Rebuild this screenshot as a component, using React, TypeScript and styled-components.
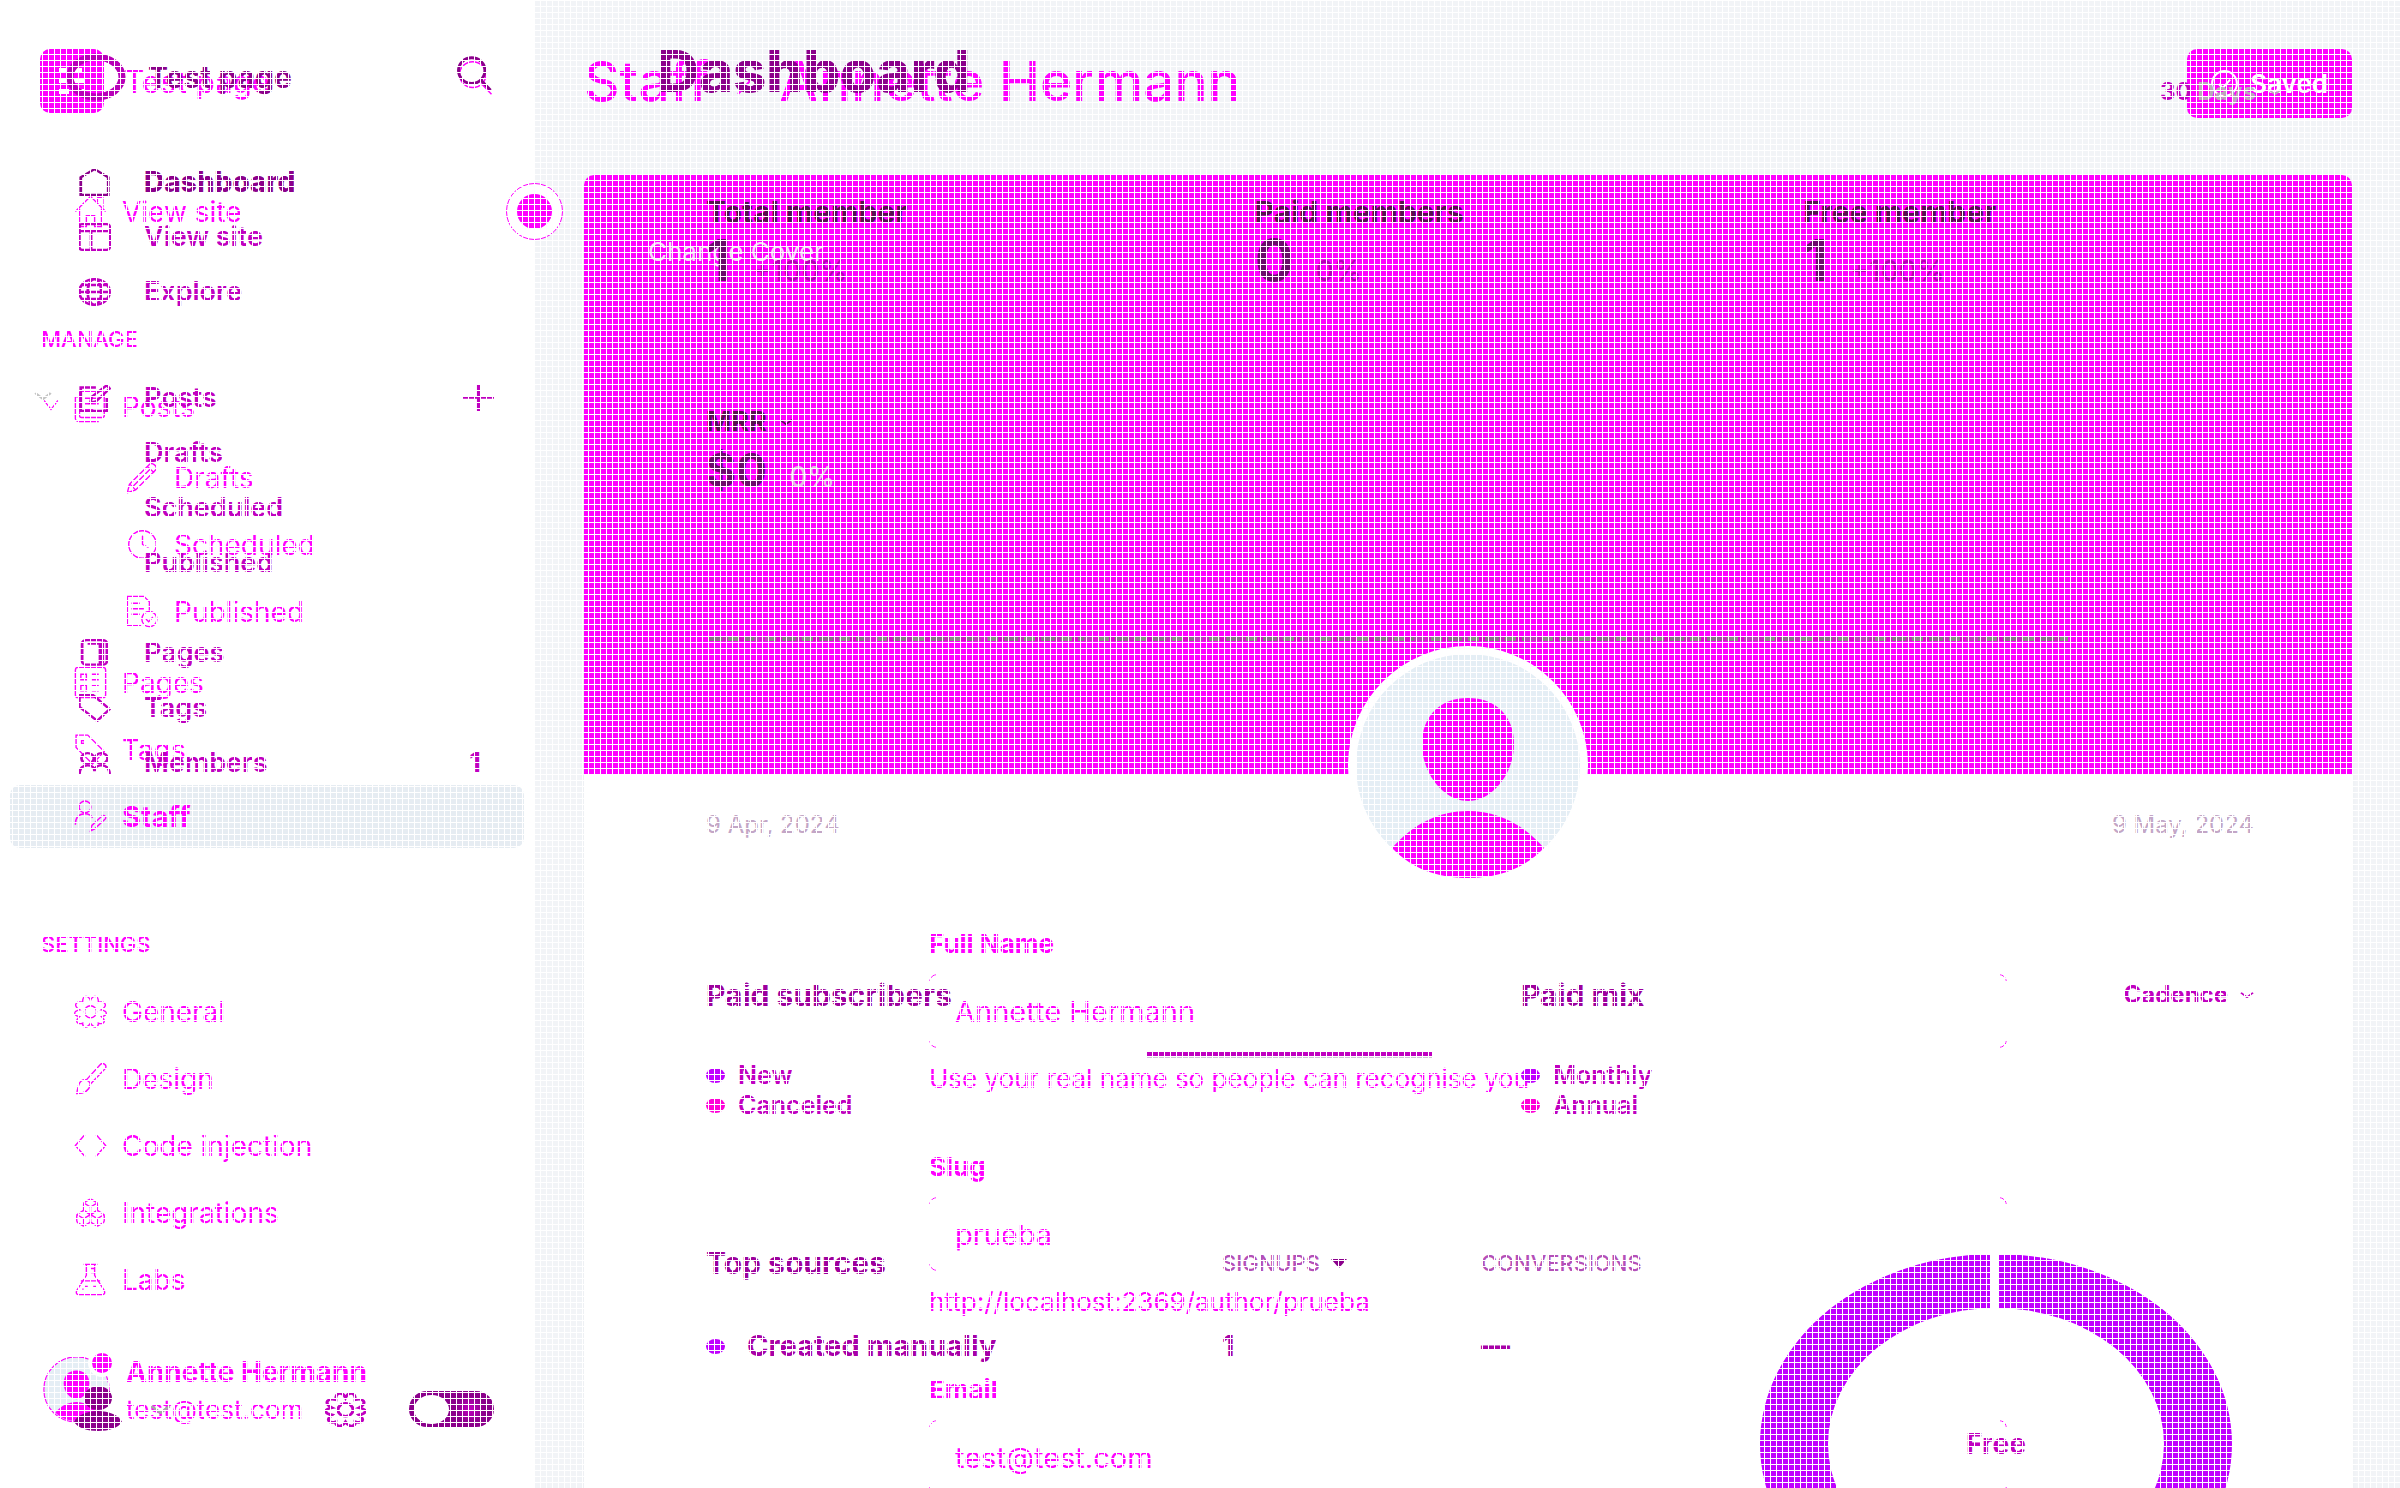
import React from "react";
import styled, { createGlobalStyle } from "styled-components";
import { Boxes, Clock } from "lucide-react";

const M = "#ff00ff";
const P = "#c000c0";
const D = "#8b008b";
const GREY = "#f2f4f7";

const Global = createGlobalStyle`
  *, *::before, *::after { box-sizing: border-box; }
  body { margin: 0; background: #fff; font-family: Inter, "Liberation Sans", sans-serif; }
  a { color: inherit; text-decoration: none; }
  button, input, select { font: inherit; color: inherit; }
  button { background: none; border: 0; padding: 0; cursor: pointer; }
  h1, h2, p, ul, figure { margin: 0; padding: 0; }
  ul { list-style: none; }
  svg { display: block; flex: none; }
`;

/* ---------- stage: two screens share one cell, a fine mesh lies over both ---------- */
const Stage = styled.div`
  display: grid;
  grid-template-columns: minmax(0, 1fr);
  grid-template-rows: 100vh;
  height: 100vh;
  overflow: hidden;
  position: relative;
  &::after {
    content: "";
    position: absolute;
    inset: 0;
    z-index: 2;
    pointer-events: none;
    background-image: linear-gradient(to right, #fff 1px, transparent 1px),
      linear-gradient(to bottom, #fff 1px, transparent 1px);
    background-size: 6px 6px;
  }
`;
const Screen = styled.div<{ $back?: boolean }>`
  grid-area: 1 / 1;
  display: flex;
  min-height: 0;
  z-index: ${(p) => (p.$back ? 0 : 1)};
  background: ${(p) => (p.$back ? GREY : "transparent")};
  color: ${(p) => (p.$back ? M : P)};
`;

/* ---------- staff screen ---------- */
const StaffBar = styled.aside`
  width: 535px;
  flex: none;
  display: flex;
  flex-direction: column;
  background: #fff;
  padding: 49px 11px 62px 10px;
  position: relative;
`;
const Brand = styled.header`
  display: flex;
  align-items: center;
  gap: 20px;
  height: 64px;
  margin-bottom: 67px;
  padding: 0 31px 0 30px;
  font-size: 31px;
  font-weight: 500;
`;
const Push = styled.span`
  margin-left: auto;
`;
const List = styled.ul<{ $inset?: boolean }>`
  display: grid;
  gap: 4px;
  margin: ${(p) => (p.$inset ? "8px 0" : "0")};
`;
const Item = styled.a<{ $active?: boolean; $deep?: boolean }>`
  display: flex;
  align-items: center;
  gap: 15px;
  height: 63px;
  padding-left: ${(p) => (p.$deep ? 116 : 64)}px;
  border-radius: 10px;
  font-size: ${(p) => (p.$active ? 29 : 28)}px;
  font-weight: ${(p) => (p.$active ? 700 : 400)};
  background: ${(p) => (p.$active ? "#e6ecf2" : "transparent")};
  position: relative;
`;
const Fold = styled.span`
  position: absolute;
  left: 33px;
  top: 24px;
`;
const Heading = styled.h2`
  margin: 80px 0 20px 31px;
  font-size: 22px;
  line-height: 32px;
  font-weight: 500;
`;
const Handle = styled.button`
  position: absolute;
  right: -28px;
  top: 183px;
  width: 57px;
  height: 57px;
  border: 1px solid ${M};
  border-radius: 50%;
  background: #fff;
  display: grid;
  place-items: center;
  &::after {
    content: "";
    width: 35px;
    height: 35px;
    border-radius: 50%;
    background: ${M};
  }
`;
const User = styled.div`
  margin-top: auto;
  padding-left: 33px;
  display: flex;
  gap: 16px;
  position: relative;
`;
const UserText = styled.div`
  font-size: 26px;
  line-height: 32px;
  strong {
    display: block;
    font-weight: 700;
    font-size: 28px;
    line-height: 32px;
    margin-bottom: 6px;
  }
`;
const Dot = styled.span`
  position: absolute;
  left: 78px;
  top: -7px;
  width: 28px;
  height: 28px;
  border-radius: 50%;
  border: 4px solid #fff;
  background: ${M};
`;
const StaffMain = styled.main`
  flex: 1;
  min-width: 0;
  display: flex;
  flex-direction: column;
  padding: 49px 48px 0 49px;
`;
const TopRow = styled.header`
  display: flex;
  justify-content: space-between;
  margin-bottom: 57px;
`;
const Crumbs = styled.h1`
  display: flex;
  align-items: center;
  gap: 28px;
  font-size: 55px;
  line-height: 64px;
  height: 64px;
  font-weight: 500;
`;
const Saved = styled.button`
  display: flex;
  align-items: center;
  gap: 12px;
  height: 69px;
  padding: 0 24px;
  border-radius: 10px;
  background: ${M};
  color: #fff;
  font-size: 26px;
  font-weight: 600;
`;
const Card = styled.section`
  flex: 1;
  background: #fff;
  border-radius: 10px 10px 0 0;
  box-shadow: 0 0 4px #e8ebf0;
`;
const Cover = styled.div`
  height: 599px;
  padding: 61px 64px;
  border-radius: 10px 10px 0 0;
  background: ${M};
`;
const CoverButton = styled.button`
  font-size: 26px;
  line-height: 32px;
  color: #f4dcf6;
`;
const Portrait = styled.div`
  width: 240px;
  margin: -128px auto 42px;
  position: relative;
`;
const Form = styled.form`
  width: 1078px;
  max-width: 100%;
  margin: 0 auto;
  display: grid;
  gap: 56px;
`;
const FieldBox = styled.div`
  display: flex;
  flex-direction: column;
  font-size: 26px;
  line-height: 32px;
  label {
    font-weight: 700;
  }
`;
const Frame = styled.div`
  margin: 14px 0 15px;
  position: relative;
  height: 74px;
  &::before {
    content: "";
    position: absolute;
    inset: 0;
    pointer-events: none;
    border: 1px solid ${M};
    border-radius: 8px;
    mask: linear-gradient(#000 0 0) 0 0 / 7px 7px no-repeat, linear-gradient(#000 0 0) 100% 0 / 7px 7px no-repeat,
      linear-gradient(#000 0 0) 0 100% / 7px 7px no-repeat, linear-gradient(#000 0 0) 100% 100% / 7px 7px no-repeat;
  }
  input {
    width: 100%;
    height: 74px;
    padding: 0 26px;
    border: 0;
    outline: 0;
    background: transparent;
    font-size: 29px;
  }
`;

/* ---------- dashboard screen ---------- */
const DashBar = styled.aside`
  width: 535px;
  flex: none;
  display: flex;
  flex-direction: column;
  padding: 53px 0 56px;
`;
const DashBrand = styled.header`
  display: flex;
  align-items: center;
  gap: 22px;
  height: 48px;
  margin-bottom: 53px;
  padding: 0 43px 0 66px;
  font-size: 30px;
  font-weight: 700;
  color: ${D};
`;
const Group = styled.ul<{ $gap?: number }>`
  margin-bottom: ${(p) => p.$gap ?? 0}px;
`;
const DashItem = styled.a<{ $strong?: boolean }>`
  display: grid;
  grid-template-columns: 33px 1fr auto;
  gap: 33px;
  align-items: center;
  height: 55px;
  padding: 0 41px 0 78px;
  font-size: ${(p) => (p.$strong ? 28 : 27)}px;
  font-weight: ${(p) => (p.$strong ? 800 : 600)};
  color: ${(p) => (p.$strong ? D : P)};
  position: relative;
`;
const GroupFold = styled.span`
  position: absolute;
  left: 34px;
  top: 22px;
  color: #c4c4c4;
`;
const Count = styled.span`
  padding-right: 13px;
  font-weight: 700;
`;
const DashFoot = styled.footer`
  margin-top: auto;
  padding: 0 41px 0 74px;
  display: flex;
  align-items: center;
  gap: 28px;
  > span {
    color: #a8a8a8;
  }
`;
const FootEnd = styled.div`
  margin-left: auto;
  display: flex;
  align-items: center;
  gap: 43px;
`;
const Toggle = styled.input`
  appearance: none;
  margin: 0;
  width: 85px;
  height: 36px;
  border-radius: 18px;
  background: radial-gradient(circle at 61px 18px, #c000c0 0, ${D} 14px);
  display: flex;
  align-items: center;
  padding-left: 5px;
  &::before {
    content: "";
    width: 35px;
    height: 29px;
    border-radius: 50%;
    background: #fff;
  }
`;
const DashMain = styled.main`
  flex: 1;
  min-width: 0;
  padding: 39px 48px 0 122px;
`;
const DashTop = styled.header`
  display: flex;
  justify-content: space-between;
  align-items: flex-end;
  height: 69px;
  padding-right: 70px;
  h1 {
    align-self: flex-start;
    font-size: 58px;
    line-height: 64px;
    font-weight: 800;
    color: ${D};
  }
`;
const Pick = styled.button<{ $size: number }>`
  display: flex;
  align-items: center;
  gap: 12px;
  font-size: ${(p) => p.$size}px;
  line-height: 32px;
  font-weight: 700;
  color: ${P};
  i {
    font-style: normal;
    color: #b9a9b9;
  }
`;
const Body = styled.div`
  padding-left: 49px;
`;
const Metrics = styled.div<{ $top: number }>`
  display: grid;
  grid-template-columns: repeat(3, 1fr);
  margin-top: ${(p) => p.$top}px;
`;
const Metric = styled.div`
  h2 {
    display: flex;
    align-items: center;
    gap: 12px;
    font-size: 30px;
    line-height: 32px;
    font-weight: 700;
    color: #57104f;
  }
`;
const Label = styled.span<{ $short?: boolean }>`
  font-size: ${(p) => (p.$short ? 27 : 30)}px;
`;
const Figure = styled.p<{ $small?: boolean }>`
  display: flex;
  align-items: baseline;
  gap: 22px;
  height: 65px;
  line-height: 65px;
  font-size: ${(p) => (p.$small ? 46 : 58)}px;
  font-weight: 700;
  color: #6c0c6c;
  span {
    font-size: 28px;
    font-weight: 500;
    color: ${(p) => (p.$small ? "#e3b9e3" : "#b400b4")};
  }
`;
const ChartLine = styled.div`
  margin: 133px 284px 0 2px;
  height: 5px;
  background: repeating-linear-gradient(90deg, transparent 0 46px, #ff00ff66 46px 60px, transparent 60px 110px),
    repeating-linear-gradient(90deg, #8a7088 0 14px, #c030b8 14px 20px, #8a8a86 20px 31px, #d410c8 31px 37px);
`;
const Dates = styled.div`
  display: flex;
  justify-content: space-between;
  margin: 168px 98px 138px 0;
  font-size: 24px;
  line-height: 32px;
  color: #c3a6c6;
`;
const Panels = styled.div`
  display: grid;
  grid-template-columns: 816fr 734fr;
  padding-right: 98px;
`;
const PanelHead = styled.div`
  display: flex;
  justify-content: space-between;
  h2 {
    font-size: 30px;
    line-height: 32px;
    font-weight: 700;
    color: #9d009d;
  }
`;
const BarSlot = styled.div`
  height: 49px;
  padding: 41px 0 0 441px;
`;
const Bar = styled.div`
  width: 285px;
  height: 6px;
  background: ${P};
  border-bottom: 1px solid #cfc4d4;
`;
const Legend = styled.li<{ $tone: string }>`
  display: flex;
  align-items: center;
  gap: 13px;
  font-size: 25px;
  line-height: 30px;
  font-weight: 600;
  &::before {
    content: "";
    width: 19px;
    height: 15px;
    border-radius: 50%;
    background: ${(p) => p.$tone};
  }
`;
const Sources = styled.table`
  margin-top: 127px;
  width: 100%;
  border-collapse: collapse;
  table-layout: fixed;
  th,
  td {
    padding: 0;
    text-align: left;
    line-height: 32px;
  }
  th {
    font-size: 22px;
    font-weight: 500;
    color: #b450b8;
  }
  th:first-child {
    width: 516px;
    font-size: 30px;
    font-weight: 700;
    color: #9d009d;
  }
  th:nth-child(2) {
    width: 259px;
  }
  th:last-child {
    white-space: nowrap;
  }
  td {
    padding-top: 51px;
    font-size: 29px;
    font-weight: 700;
    color: #a800a8;
  }
`;
const Sort = styled.span`
  display: flex;
  align-items: center;
  gap: 11px;
`;
const Source = styled.span`
  display: flex;
  align-items: center;
  gap: 22px;
  &::before {
    content: "";
    width: 19px;
    height: 15px;
    border-radius: 50%;
    background: #c000ff;
  }
`;
const Donut = styled.figure`
  margin: 134px 21px 0 auto;
  width: 474px;
  display: grid;
  place-items: center;
  font-size: 28px;
  font-weight: 700;
  > * {
    grid-area: 1 / 1;
  }
`;

/* ---------- drawings ---------- */
type Box = { w?: number; h?: number; vb?: string; sw?: number; children: React.ReactNode };
const Ink = ({ w = 33, h = 33, vb = "0 0 24 24", sw = 1, children }: Box) => (
  <svg width={w} height={h} viewBox={vb} fill="none" stroke="currentColor" strokeWidth={sw} preserveAspectRatio="none" aria-hidden>
    {children}
  </svg>
);
const Wide = ({ children }: { children: React.ReactNode }) => (
  <Ink w={33} h={28} sw={2}>{children}</Ink>
);
const Down = ({ w = 14, h = 6, sw = 2 }) => (
  <Ink w={w} h={h} vb="0 0 14 8" sw={sw}><path d="M1 1l6 6 6-6" /></Ink>
);
const Gear = ({ w = 33, h = 33, sw = 1 }) => (
  <Ink w={w} h={h} sw={sw}>
    <path d="M12 4C12.800 2 14 .8 15.500 1s2.300 1.800 2.200 4.300c2.300-.6 4-.4 4.800.9s-.3 3.100-2.700 4.600c2.400.5 3.700 1.300 3.700 2.400s-1.400 2-3.600 2.500c1.800 1.600 2.600 3 1.800 4.200s-2.100 1.200-4 .5c.1 1.700-.5 2.700-1.900 2.900s-2.800-1-3.800-2.800c-1 1.800-2.400 3-3.800 2.800s-2-1.200-1.900-2.900c-1.900.7-3.200.7-4-.5s0-2.600 1.800-4.200C1.900 15.200.5 14.300.5 13.200s1.300-1.900 3.700-2.400C1.800 9.300.7 7.500 1.500 6.200s2.500-1.500 4.800-.9C6.200 2.800 7 1.200 8.500 1S11.200 2 12 4z" />
    <circle cx="12" cy="12.200" r="4.400" />
  </Ink>
);
const Search = ({ sw = 1.5 }) => (
  <Ink w={36} h={35} sw={sw}>
    <circle cx="10.500" cy="10" r="8.800" /><path d="M17 17l6 6.500" />
  </Ink>
);
const Face = ({ size, line = 0 }: { size: number; line?: number }) => (
  <svg width={size} height={size} viewBox="0 0 240 240" aria-hidden>
    <circle cx="120" cy="120" r="120" fill="#fff" />
    <circle cx="120" cy="120" r={line ? 117 : 112} fill="#e5eef5" stroke={M} strokeWidth={line} />
    <path d="M120 52c28 0 46 18 46 46 0 30-22 57-46 57s-46-27-46-57c0-28 18-46 46-46z" fill={M} />
    <path d="M44 202c22-25 48-37 76-37s54 12 76 37c-20 21-46 30-76 30s-56-9-76-30z" fill={M} />
  </svg>
);

const staffTop = [
  ["Drafts", <Ink><path d="M1 23l1.500-6L17 2.500c2-2 6.500 1.500 4.500 4L7 21zM15.500 4l5 4.500M3 17l4 4M5 18.500L18 5.500" /></Ink>],
  ["Scheduled", <Clock size={33} strokeWidth={1} />],
  ["Published", (
    <Ink><path d="M11 22H1V1h12l4 4v6M4 6h6M4 10h9M4 14h6" /><circle cx="17" cy="17.500" r="5.500" /><path d="M14.500 17.500l2 2 3-3.500" /></Ink>
  )],
] as const;
const staffLow = [
  ["Pages", <Ink><rect x="1" y="1" width="22" height="22" rx="2" /><path d="M5 6h4v4H5zM5 14h4v4H5zM13 6h5M13 10h5M13 14h5M13 18h5" /></Ink>],
  ["Tags", <Ink><path d="M1.500 1.500h8.500l12 12-8.500 9-12-12z" /><path d="M5.500 5.500h2v2h-2z" /></Ink>],
  ["Staff", <Ink><circle cx="8" cy="5" r="4.300" /><path d="M1 18c0-6 3-8 7-8 3 0 4.500 1 5.500 3M12 22.500l1-4 7.500-7c1.500-1 3.500 1 2 2.500l-7.500 7z" /></Ink>],
] as const;
const settings = [
  ["General", <Gear />],
  ["Design", <Ink><path d="M9 13L19 2c2-2 5 0 4 2.500L12 16M9 13c-5-1-6 4-7 10 6 0 9-2 10-7-.5-1.500-1.500-2.500-3-3z" /></Ink>],
  ["Code injection", <Ink><path d="M8 4l-7 8 7 8M16 4l7 8-7 8" /></Ink>],
  ["Integrations", <Boxes size={33} strokeWidth={1} />],
  ["Labs", <Ink><path d="M7 1h10M9 1v8L2 20c-.8 2 0 3 1.500 3h17c1.500 0 2.300-1 1.500-3L15 9V1M5 13h14M12 4h3M12 7h3M8 17h2M14 17h2M6 19h1" /></Ink>],
] as const;

const Field = ({ id, label, value, hint }: { id: string; label: string; value: string; hint?: string }) => (
  <FieldBox>
    <label htmlFor={id}>{label}</label>
    <Frame><input id={id} defaultValue={value} /></Frame>
    {hint && <p>{hint}</p>}
  </FieldBox>
);

const StaffScreen = () => (
  <Screen $back>
    <StaffBar>
      <Brand>
        <svg width="64" height="64" aria-hidden>
          <rect width="64" height="64" rx="10" fill={M} />
          <path d="M19 19h8v5h-8zM33 19h9v5h-9zM19 29h26v5H19zM19 40h10v5H19zM35 40h10v5H35z" fill="#fff" />
        </svg>
        Test page
        <Push><button aria-label="Search"><Search sw={1} /></button></Push>
      </Brand>
      <Item href="#view">
        <Ink><path d="M1 12L12 1l11 11M4 10v13h5v-8h6v8h5V10M17 5V2h4v7" /></Ink>
        View site
      </Item>
      <Heading>MANAGE</Heading>
      <Item href="#posts">
        <Fold><Down w={16} h={12} sw={1} /></Fold>
        <Ink><rect x="4" y="1" width="18" height="19" rx="1.500" /><path d="M4 5H1v15a2.500 2.500 0 002.500 3H18M8 6h10M8 10h10M8 14h6" /></Ink>
        Posts
      </Item>
      <List $inset>
        {staffTop.map(([t, i]) => <li key={t}><Item $deep href={`#${t}`}>{i}{t}</Item></li>)}
      </List>
      <List>
        {staffLow.map(([t, i]) => <li key={t}><Item $active={t === "Staff"} href={`#${t}`}>{i}{t}</Item></li>)}
      </List>
      <Heading>SETTINGS</Heading>
      <List>
        {settings.map(([t, i]) => <li key={t}><Item href={`#${t}`}>{i}{t}</Item></li>)}
      </List>
      <User>
        <Face size={67} line={4} />
        <Dot />
        <UserText><strong>Annette Hermann</strong>test@test.com</UserText>
      </User>
      <Handle aria-label="Collapse sidebar" />
    </StaffBar>
    <StaffMain>
      <TopRow>
        <Crumbs>
          Staff <Ink w={14} h={30} vb="0 0 14 30" sw={2}><path d="M1 2l12 13L1 28" /></Ink> Annette Hermann
        </Crumbs>
        <Saved>
          <Ink w={27} h={27} sw={1.8}><circle cx="12" cy="12" r="11" /><path d="M7 12.500l3.500 3.500L17 8.500" /></Ink>
          Saved
        </Saved>
      </TopRow>
      <Card>
        <Cover><CoverButton>Change Cover</CoverButton></Cover>
        <Portrait><Face size={240} /></Portrait>
        <Form>
          <Field id="name" label="Full Name" value="Annette Hermann" hint="Use your real name so people can recognise you" />
          <Field id="slug" label="Slug" value="prueba" hint="http://localhost:2369/author/prueba" />
          <Field id="email" label="Email" value="test@test.com" />
        </Form>
      </Card>
    </StaffMain>
  </Screen>
);

const DashboardScreen = () => (
  <Screen>
    <DashBar>
      <DashBrand>
        <svg width="60" height="48" aria-hidden><ellipse cx="30" cy="24" rx="26" ry="20" fill="none" stroke="#b800b8" strokeWidth="7" /></svg>
        Test page
        <Push><button aria-label="Search dashboard"><Search sw={2} /></button></Push>
      </DashBrand>
      <nav>
        <Group $gap={51}>
          <li><DashItem $strong href="#dashboard"><Wide><path d="M2 23V8l10-7 10 7v15z" /></Wide>Dashboard</DashItem></li>
          <li><DashItem href="#site"><Wide><rect x="1" y="1" width="22" height="22" rx="2" /><path d="M1 7h22M9.500 7v16" /></Wide>View site</DashItem></li>
          <li><DashItem href="#explore"><Wide><circle cx="12" cy="12" r="11" /><ellipse cx="12" cy="12" rx="5" ry="11" /><path d="M1 12h22M3 6h18M3 18h18" /></Wide>Explore</DashItem></li>
        </Group>
        <Group $gap={35}>
          <li>
            <DashItem href="#p">
              <GroupFold><Down w={18} h={8} /></GroupFold>
              <Wide><path d="M13 3H2v20h19V12" /><path d="M9 16l1-5L21 1l2 3-10 11z" /></Wide>
              Posts
              <Ink w={31} h={27} sw={2.4}><path d="M12 0v24M0 12h24" /></Ink>
            </DashItem>
          </li>
          {["Drafts", "Scheduled", "Published"].map((t) => <li key={t}><DashItem href={`#d-${t}`}><span />{t}</DashItem></li>)}
        </Group>
        <Group>
          <li><DashItem href="#pages"><Wide><rect x="3" y="1" width="18" height="21" rx="3" /><path d="M7 4h9v18M18 2v19" /></Wide>Pages</DashItem></li>
          <li><DashItem href="#tags"><Wide><path d="M1 1h10l12 12-9 10L1 11z" /></Wide>Tags</DashItem></li>
          <li><DashItem href="#members"><Wide><circle cx="7" cy="8" r="4.500" /><circle cx="17" cy="8" r="4.500" /><path d="M1 22c0-6 3-8 6-8s5 2 5 5c0-3 2-5 5-5s6 2 6 8" /></Wide>Members<Count>1</Count></DashItem></li>
        </Group>
      </nav>
      <DashFoot>
        <svg width="48" height="46" aria-hidden><g fill={D}><ellipse cx="24" cy="12" rx="14" ry="12" /><path d="M0 36c3-7 13-11 24-11s21 4 24 11c-4 6-13 9-24 9S4 42 0 36z" /></g></svg>
        <span><Down w={21} h={9} /></span>
        <FootEnd>
          <button aria-label="Settings"><Gear w={41} h={35} sw={1.8} /></button>
          <Toggle type="checkbox" aria-label="Dark mode" />
        </FootEnd>
      </DashFoot>
    </DashBar>
    <DashMain>
      <DashTop>
        <h1>Dashboard</h1>
        <Pick $size={24}><span>30 <i>Days</i></span><i><Down /></i></Pick>
      </DashTop>
      <Body>
        <Metrics $top={88}>
          <Metric><h2><Label>Total member</Label></h2><Figure>1<span>+100%</span></Figure></Metric>
          <Metric><h2><Label>Paid members</Label></h2><Figure>0<span>0%</span></Figure></Metric>
          <Metric><h2><Label>Free member</Label></h2><Figure>1<span>+100%</span></Figure></Metric>
        </Metrics>
        <Metrics $top={113}>
          <Metric><h2><Label $short>MRR</Label><Down /></h2><Figure $small>$0<span>0%</span></Figure></Metric>
        </Metrics>
        <ChartLine />
        <Dates><span>9 Apr, 2024</span><span>9 May, 2024</span></Dates>
        <Panels>
          <section>
            <PanelHead><h2>Paid subscribers</h2></PanelHead>
            <BarSlot><Bar /></BarSlot>
            <ul><Legend $tone="#c000ff">New</Legend><Legend $tone="#ff00d8">Canceled</Legend></ul>
            <Sources>
              <thead><tr><th>Top sources</th><th><Sort>SIGNUPS <svg width="16" height="9" aria-hidden><path d="M0 0h16l-8 9z" fill={D} /></svg></Sort></th><th>CONVERSIONS</th></tr></thead>
              <tbody><tr><td><Source>Created manually</Source></td><td>1</td><td>—</td></tr></tbody>
            </Sources>
          </section>
          <section>
            <PanelHead><h2>Paid mix</h2><Pick $size={24}>Cadence <Down /></Pick></PanelHead>
            <BarSlot />
            <ul><Legend $tone="#c000ff">Monthly</Legend><Legend $tone="#ff00d8">Annual</Legend></ul>
            <Donut>
              <svg width="474" height="380" viewBox="0 0 474 380" aria-hidden>
                <path fillRule="evenodd" fill="#c000ff" d="M1 190a236 190 0 10472 0a236 190 0 10-472 0zM69 190a168 136 0 01336 0a168 136 0 01-336 0z" />
                <path d="M235 0v56" stroke="#fff" strokeWidth="8" />
              </svg>
              <span>Free</span>
            </Donut>
          </section>
        </Panels>
      </Body>
    </DashMain>
  </Screen>
);

export default function App() {
  return (
    <>
      <Global />
      <Stage>
        <StaffScreen />
        <DashboardScreen />
      </Stage>
    </>
  );
}
